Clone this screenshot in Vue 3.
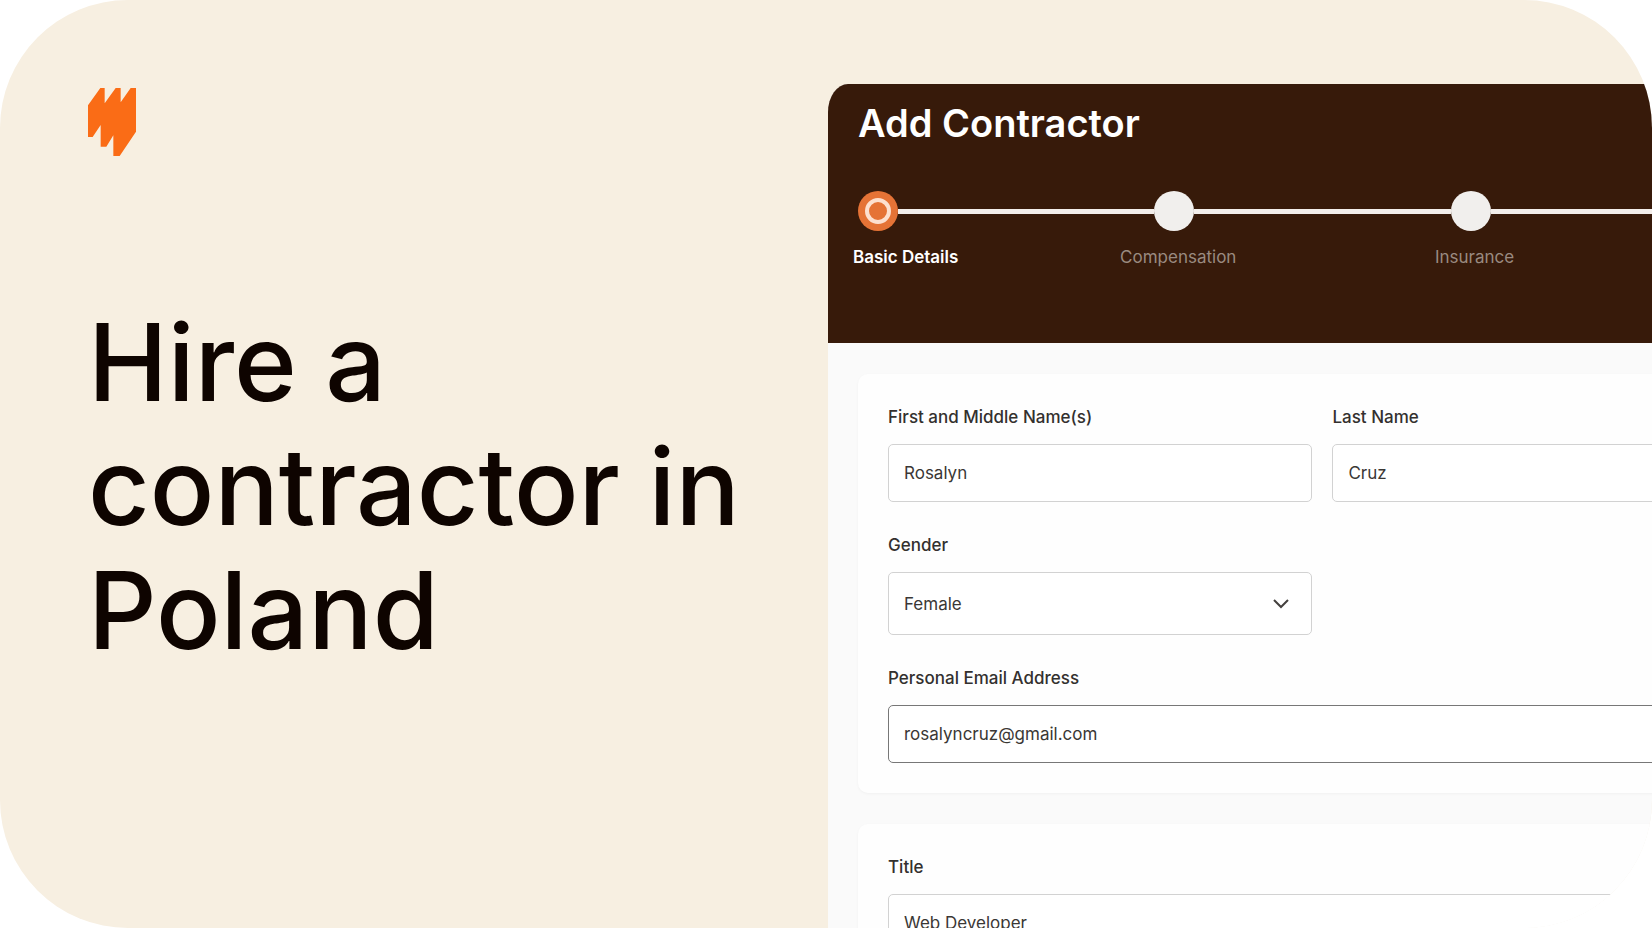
<script setup>
import { ref } from 'vue'

const steps = [
  { name: 'Basic Details', current: true },
  { name: 'Compensation', current: false },
  { name: 'Insurance', current: false },
]

const firstName = ref('Rosalyn')
const lastName = ref('Cruz')
const gender = ref('Female')
const email = ref('rosalyncruz@gmail.com')
const title = ref('Web Developer')
</script>

<template>
  <main class="hero">
    <section class="intro">
      <svg class="logo" viewBox="0 0 144 204" aria-hidden="true">
        <path d="M0 52 37 0H50V46L83 0H98V43L128 0H144V131L95 204H76V142L55 176H38V111L14 147H0Z" fill="#fa6c16" />
      </svg>
      <h1>Hire a contractor in Poland</h1>
    </section>

    <section class="stage">
      <div class="panel">
        <header class="panel-head">
          <h2>Add Contractor</h2>
          <ol class="steps">
            <li v-for="step in steps" :key="step.name" :class="{ current: step.current }">
              <div class="track"><span class="dot"></span></div>
              <span class="step-name">{{ step.name }}</span>
            </li>
          </ol>
        </header>

        <form class="form" @submit.prevent>
          <div class="card">
            <div class="field">
              <label for="first">First and Middle Name(s)</label>
              <input id="first" v-model="firstName" type="text" />
            </div>
            <div class="field">
              <label for="last">Last Name</label>
              <input id="last" v-model="lastName" type="text" />
            </div>
            <div class="field">
              <label for="gender">Gender</label>
              <div class="select">
                <select id="gender" v-model="gender">
                  <option>Female</option>
                  <option>Male</option>
                </select>
                <svg viewBox="0 0 16 10" aria-hidden="true">
                  <path d="M1 1 8 8 15 1" fill="none" stroke="#44403e" stroke-width="2" />
                </svg>
              </div>
            </div>
            <div class="field wide">
              <label for="email">Personal Email Address</label>
              <input id="email" v-model="email" class="active" type="email" />
            </div>
          </div>

          <div class="card">
            <div class="field wide">
              <label for="title">Title</label>
              <input id="title" v-model="title" type="text" />
            </div>
          </div>
        </form>
      </div>
    </section>
  </main>
</template>

<style>
body {
  margin: 0;
  background: #fff;
}
</style>

<style scoped>
.hero {
  box-sizing: border-box;
  display: grid;
  grid-template-columns: 828fr 824fr;
  height: 100vh;
  overflow: hidden;
  border-radius: 128px;
  background: #f7efe1;
  font-family: Inter, "Liberation Sans", sans-serif;
}

.intro {
  display: flex;
  flex-direction: column;
  gap: 144px;
  padding: 88px 80px 0 88px;
}

.logo {
  width: 48px;
  height: 68px;
}

h1 {
  margin: 0;
  color: #0e0400;
  font-size: 107px;
  font-weight: 500;
  line-height: 124px;
}

.stage {
  min-width: 0;
  padding-top: 84px;
}

.panel {
  width: 120%;
  min-height: 100%;
  overflow: hidden;
  border-top-left-radius: 20px 28px;
  background: #fafafa;
}

.panel-head {
  box-sizing: border-box;
  height: 259px;
  padding: 16px 30px 0;
  background: #371a0a;
  color: #fff;
}

h2 {
  margin: 0;
  font-size: 38px;
  font-weight: 600;
  line-height: 46px;
}

.steps {
  display: flex;
  margin: 45px 0 0;
  padding: 0 40px 0 0;
  list-style: none;
}

.steps li {
  flex: 1;
  min-width: 0;
}

.track {
  display: flex;
  align-items: center;
}

.track::after {
  flex: 1;
  height: 5px;
  background: #f3eeeb;
  content: "";
}

.dot {
  box-sizing: border-box;
  display: flex;
  align-items: center;
  justify-content: center;
  width: 40px;
  height: 40px;
  border-radius: 50%;
  background: #f1efed;
}

.current .dot {
  background: #e57336;
}

.current .dot::after {
  box-sizing: border-box;
  width: 26px;
  height: 26px;
  border: 4px solid #fde0cf;
  border-radius: 50%;
  content: "";
}

.step-name {
  display: flex;
  justify-content: center;
  width: 48px;
  margin-top: 14px;
  color: #9a8a80;
  font-size: 17px;
  line-height: 24px;
  white-space: nowrap;
}

.current .step-name {
  justify-content: flex-start;
  margin-left: -5px;
  color: #fff;
  font-weight: 600;
}

.form {
  display: grid;
  gap: 31px;
  padding: 31px 30px 30px;
}

.card {
  display: grid;
  grid-template-columns: 1fr 1fr;
  gap: 30px 20px;
  padding: 30px;
  border-radius: 10px;
  background: #fefefe;
  box-shadow: 0 1px 3px rgba(0, 0, 0, 0.04);
}

.field {
  display: flex;
  flex-direction: column;
  gap: 14px;
  min-width: 0;
}

.wide {
  grid-column: 1 / -1;
}

label {
  color: #33302e;
  font-size: 17px;
  font-weight: 500;
  line-height: 26px;
}

input,
select {
  box-sizing: border-box;
  width: 100%;
  height: 58px;
  margin: 0;
  padding: 0 15px;
  border: 1px solid #d2d2d2;
  border-radius: 5px;
  outline: none;
  background: #fff;
  color: #3a3735;
  font-family: inherit;
  font-size: 17px;
}

input.active {
  border-color: #777;
}

.select {
  display: grid;
  align-items: center;
}

.select > * {
  grid-area: 1 / 1;
}

select {
  height: 63px;
  appearance: none;
}

.select svg {
  width: 16px;
  height: 10px;
  margin-right: 23px;
  justify-self: end;
  pointer-events: none;
}
</style>
